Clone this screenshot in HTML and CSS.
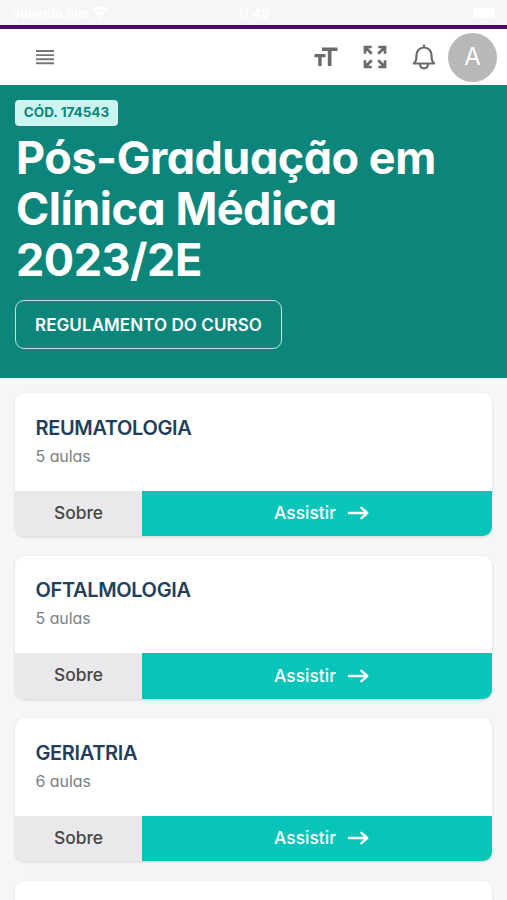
FILE: index.html
```
<!DOCTYPE html>
<html lang="pt-BR">
<head>
<meta charset="utf-8">
<meta name="viewport" content="width=device-width, initial-scale=1">
<title>Pós-Graduação em Clínica Médica</title>
<link rel="stylesheet" href="styles.css">
</head>
<body>
<div class="status">
  <span class="carrier">ouvindo.live
    <svg width="17" height="13" viewBox="0 0 17 13" fill="none" stroke="#fff" stroke-width="2.4"><path d="M1 5Q8.500-1.500 16 5M4 8.500Q8.500 4.500 13 8.500"/><circle cx="8.500" cy="11" r="1" fill="#fff" stroke-width="1"/></svg>
  </span>
  <span class="clock">11:49</span>
  <span class="battery"></span>
</div>
<header class="topbar">
  <button class="icon menu" aria-label="Menu"><svg width="18" height="16" viewBox="0 0 18 16" stroke="#777" stroke-width="1.900"><path d="M0 2H18M0 6.100H18M0 10.200H18M0 14.300H18"/></svg></button>
  <button class="icon text-size" aria-label="Tamanho do texto"><svg width="24" height="20" viewBox="0 0 24 20" fill="#6b6b6b"><path d="M8 .5H23.500V4H17.500V19H13.800V4H8ZM.5 7H11.500V10.300H7.700V19H4.200V10.300H.5Z"/></svg></button>
  <button class="icon expand" aria-label="Tela cheia"><svg width="24" height="24" viewBox="0 0 24 24" fill="none" stroke="#6b6b6b" stroke-width="2.700"><path d="M2 8.700V2H8.700M2.500 2.500L8.800 8.800M15.300 2H22V8.700M21.500 2.500L15.200 8.800M2 15.300V22H8.700M2.500 21.500L8.800 15.200M15.300 22H22V15.300M21.500 21.500L15.200 15.200"/></svg></button>
  <button class="icon bell" aria-label="Notificações"><svg width="24" height="26" viewBox="0 0 24 26" fill="none" stroke="#6b6b6b" stroke-width="2.200" stroke-linejoin="round" stroke-linecap="round"><path d="M1.800 19.500C4 18 4.500 15.500 4.500 11.500C4.500 7 7.500 3.500 12 3.500S19.500 7 19.500 11.500C19.500 15.500 20 18 22.200 19.500ZM8 20C8 22.500 9.500 24.300 12 24.300S16 22.500 16 20M12 1.500V3.500"/></svg></button>
  <div class="avatar">A</div>
</header>
<section class="hero">
  <span class="badge">CÓD. 174543</span>
  <h1>Pós-Graduação em<br>Clínica Médica<br>2023/2E</h1>
  <a class="rules">REGULAMENTO DO CURSO</a>
</section>
<main class="list">
  <article class="card">
    <div class="body"><h2>REUMATOLOGIA</h2><p>5 aulas</p></div>
    <div class="actions"><a class="about">Sobre</a><a class="watch">Assistir <svg width="21" height="14" viewBox="0 0 21 14"><path d="M1 7H19M13.500 1.800L19.200 7L13.500 12.200"/></svg></a></div>
  </article>
  <article class="card">
    <div class="body"><h2>OFTALMOLOGIA</h2><p>5 aulas</p></div>
    <div class="actions"><a class="about">Sobre</a><a class="watch">Assistir <svg width="21" height="14" viewBox="0 0 21 14"><path d="M1 7H19M13.500 1.800L19.200 7L13.500 12.200"/></svg></a></div>
  </article>
  <article class="card">
    <div class="body"><h2>GERIATRIA</h2><p>6 aulas</p></div>
    <div class="actions"><a class="about">Sobre</a><a class="watch">Assistir <svg width="21" height="14" viewBox="0 0 21 14"><path d="M1 7H19M13.500 1.800L19.200 7L13.500 12.200"/></svg></a></div>
  </article>
  <article class="card"><div class="body"></div></article>
</main>
</body>
</html>
```
FILE: styles.css
```
* { box-sizing: border-box; margin: 0; padding: 0; }
body {
  height: 900px;
  overflow: hidden;
  background: #f4f6f8;
  font-family: Inter, "Liberation Sans", sans-serif;
  font-feature-settings: "cv11";
}
.status {
  height: 25px;
  display: grid;
  grid-template-columns: 1fr auto 1fr;
  align-items: center;
  padding: 0 12px;
  color: #fff;
  font-size: 13px;
  font-weight: 600;
}
.carrier { display: flex; align-items: center; gap: 3px; }
.battery { justify-self: end; width: 22px; height: 10px; border-radius: 3px; background: #fff; }
.topbar {
  height: 60px;
  display: flex;
  align-items: center;
  background: #fff;
  border-top: 4px solid #480b69;
  padding: 0 10px 0 36px;
}
.icon { border: 0; background: none; display: flex; }
.menu { margin-right: auto; }
.expand { margin-left: 25px; }
.bell { margin: 0 12px 0 25px; }
.avatar {
  width: 49px;
  height: 49px;
  border-radius: 50%;
  background: #b8b8b8;
  color: #fff;
  font-size: 24px;
  line-height: 48px;
  text-align: center;
}
.hero { height: 293px; background: #0c857b; color: #fff; padding: 15px 15px 0; }
.badge {
  display: block;
  width: 103px;
  height: 26px;
  border-radius: 4px;
  background: #cbf6f0;
  color: #0c857b;
  font-size: 13.5px;
  font-weight: 700;
  line-height: 25px;
  text-align: center;
  white-space: nowrap;
}
h1 { margin: 6px 0 0 1px; font-size: 45px; line-height: 51px; font-weight: 700; letter-spacing: -.5px; white-space: nowrap; }
.rules {
  display: block;
  width: 267px;
  height: 49px;
  margin-top: 15px;
  border: 1.500px solid #bfe6e2;
  border-radius: 9px;
  font-size: 17px;
  font-weight: 600;
  letter-spacing: .08px;
  line-height: 48px;
  text-align: center;
  white-space: nowrap;
}
.list { height: 522px; overflow: hidden; display: grid; align-content: start; gap: 19.500px; padding: 15px 15px 0 15px; }
.card {
  height: 143px;
  background: #fff;
  border-radius: 9px;
  overflow: hidden;
  box-shadow: 0 1px 3px rgba(0, 0, 0, .14);
}
.body { height: 97.500px; padding: 21.500px 20.500px 0; }
h2 { color: #233e58; font-size: 20px; line-height: 26px; font-weight: 600; letter-spacing: -.36px; }
.body p { color: #7a7f86; font-size: 16px; line-height: 22px; margin-top: 4px; letter-spacing: -.05px; }
.actions { height: 45.500px; display: grid; grid-template-columns: 127px 1fr; font-size: 17.400px; font-weight: 500; line-height: 44.500px; }
.about { background: #e9e9eb; color: #464646; text-align: center; }
.watch { background: #08c4b9; color: #fff; display: flex; align-items: center; justify-content: center; gap: 12px; padding-left: 9px; }
.watch svg { fill: none; stroke: #fff; stroke-width: 2.400; stroke-linecap: round; stroke-linejoin: round; }
```
